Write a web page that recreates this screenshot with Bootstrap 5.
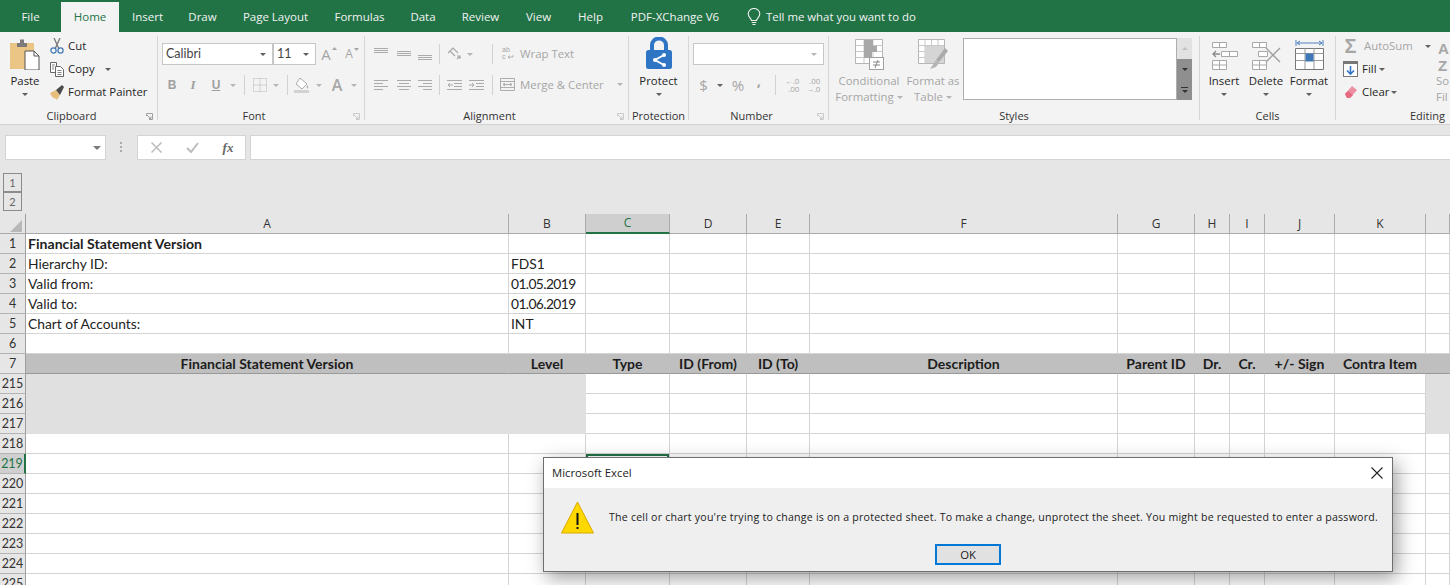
<!doctype html>
<html lang="en">
<head>
<meta charset="utf-8">
<title>Microsoft Excel</title>
<link href="https://cdn.jsdelivr.net/npm/bootstrap@5.3.0/dist/css/bootstrap.min.css" rel="stylesheet">
<style>
html,body{height:585px;overflow:hidden}
body{position:relative;width:1450px;font-family:"Open Sans","Noto Sans",sans-serif;font-size:11.4px;color:#262626;background:#e6e6e6}
svg{display:block}
.tabs{height:32px;background:#217346;display:grid;grid-template-columns:61px 58px 57px 53px 93px 75px 52px 63px 53px 51px 118px 1fr;padding-top:2px;flex-wrap:nowrap}
.tabs .nav-link{padding:0;height:30px;line-height:30px;text-align:center;color:#f2f2f2;font-size:11.5px}
.tabs .nav-link.active{background:#f3f3f3;color:#217346}
.tell{display:flex;align-items:center;gap:5px;padding-left:13px;height:30px;color:#f2f2f2;font-size:11.4px}
.ribbon{height:93px;background:#f3f3f3;border-bottom:1px solid #d2d2d2;padding-top:4px;display:flex}
.rg{height:84px;border-right:1px solid #d6d6d6;flex:none;display:flex;flex-direction:column}
.rg:last-child{border-right:0;flex:1;min-width:0}
.g1{width:158px}.g2{width:207px}.g3{width:264px}.g4{width:60px}.g5{width:140px}.g6{width:371px}.g7{width:136px}
.rb{height:72px;flex:none;display:flex}
.pl4{padding-left:4px}.pl3{padding-left:3px}
.rl{height:12px;line-height:16px;display:grid;grid-template-columns:1fr auto 1fr;color:#333;font-size:11px;padding-right:14px}
.rl svg{justify-self:end;margin:5px -10px 0 0}
.rl.plain{grid-template-columns:1fr;padding-right:0;text-align:center}
.rl.edit{grid-template-columns:1fr;padding:0 0 0 74px}
.big{display:flex;flex-direction:column;align-items:center;padding-top:2px;white-space:nowrap;line-height:16px;flex:none}
.big .ic{height:32px;display:flex;align-items:flex-end;justify-content:center;margin-bottom:3px}
.big .car{margin-top:4px}
.big span .car{margin:0;vertical-align:middle}
.car{display:inline-block;width:0;height:0;border:3px solid transparent;border-top:3px solid #5f5f5f;border-bottom:0;flex:none}
.dim .car,.car.dim{border-top-color:#b5b5b5}
.dim{color:#a6a6a6}
.three{display:grid;grid-template-rows:20px 20px 20px;row-gap:3px;flex:none}
.three>div{display:flex;align-items:center;white-space:nowrap}
.clip-big{width:50px}
.prot{width:59px}
.clip-small>div{gap:4px}
.clip-small .car{margin-left:6px}
.tworow{padding:7px 0 0 4px;display:flex;flex-direction:column;gap:9px}
.row2{display:grid;height:22px;align-items:center;justify-items:center}
.row2>.lft{justify-self:start;display:flex;align-items:center;white-space:nowrap}
.wrapt{padding-left:6px;gap:6px}
.merge{padding-left:4px;gap:5px}
.merge .car{margin-left:8px}
.f1{grid-template-columns:111px 43px 26px 20px}
.f2{grid-template-columns:20px 22px 24px 10px 12px 20px 12px 10px 20px 14px 22px 12px}
.a1{grid-template-columns:24px 22px 20px 8px 22px 10px 13px 8px auto}
.a2{grid-template-columns:24px 22px 20px 8px 22px 23px 8px auto}
.n1{grid-template-columns:131px}
.n2{grid-template-columns:21px 12px 24px 18px 14px 20px 22px}
.combo{height:22px;background:#fff;border:1px solid #c6c6c6;display:flex;align-items:center;justify-content:space-between;padding:0 6px 0 3px;font-family:"Lato",sans-serif;font-size:12.5px;color:#444;justify-self:stretch;width:100%}
.combo.end{justify-content:flex-end}
.vs{width:1px;height:20px;background:#d2d2d2}
.B{font-family:"Liberation Sans",sans-serif;font-weight:700;font-size:12px;color:#a0a0a0}
.I{font-family:"Liberation Serif",serif;font-style:italic;font-weight:700;font-size:13px;color:#a0a0a0}
.U{font-family:"Liberation Sans",sans-serif;font-weight:700;font-size:12px;color:#a0a0a0;text-decoration:underline}
.bigA{font-family:"Open Sans",sans-serif;font-size:15px;color:#a6a6a6;line-height:1;display:flex;align-items:flex-start;gap:1px}
.smA{font-size:12px;align-items:flex-start}
.colorA{font-size:16px;font-weight:600}
.dollar{font-size:15px;color:#a6a6a6}
.pct{font-size:15px;color:#a6a6a6}
.comma{font-weight:700;font-size:15px;color:#a6a6a6;line-height:1;margin-top:-9px}
.dec{font-size:8px;line-height:8px;color:#a6a6a6;text-align:right;white-space:pre}
.s-cf{width:72px}.s-ft{width:56px}
.gal{margin:2px 0 0 2px;height:62px;display:flex;flex:none}
.gal-w{width:214px;background:#fff;border:1px solid #aeaeae}
.gal-s{width:15px;display:flex;flex-direction:column}
.gal-s>div{flex:1;display:flex;flex-direction:column;align-items:center;justify-content:center;background:#8f8f8f}
.gal-s>div:first-child{background:#e2e2e2}
.gal-s .tri-u{width:0;height:0;border:3px solid transparent;border-bottom:3px solid #c0c0c0;border-top:0}
.gal-s .car{border-top-color:#333}
.gal-s .bar{width:7px;height:1px;background:#333;margin-bottom:2px}
.cw{width:42px}.cw2{width:44px}
.ed1{width:100px;padding-left:7px}
.ed1>div{gap:4px}
.ed1 .car.auto{margin-left:8px;border-top-color:#5f5f5f}
.ed1 .tight{gap:2px}
.ed1 .w15{width:15px;display:flex;justify-content:center;flex:none;margin-right:2px}
.sig{font-family:"Liberation Sans",sans-serif;font-size:20px;font-weight:700;color:#a6a6a6;line-height:20px}
.sortc{padding-top:4px;line-height:16px;color:#a6a6a6}
.az{font-family:"Liberation Sans",sans-serif;font-weight:700;font-size:15px;line-height:17px;height:30px;margin:0 0 3px 2px}
.fbar{height:89px;padding-top:10px}
.fbar-r{display:flex;height:25px}
.namebox{width:101px;margin-left:5px;background:#fff;border:1px solid #d4d4d4;display:flex;align-items:center;justify-content:flex-end;padding-right:3px}
.namebox .car{border-width:4px;border-top-color:#7a7a7a;border-bottom:0;margin-right:1px}
.dots{width:31px;display:flex;justify-content:center;align-items:center}
.fbtns{width:109px;background:#fff;border:1px solid #d4d4d4;display:grid;grid-template-columns:36px 36px 36px;align-items:center;justify-items:center;padding-left:0;margin-right:4px}
.fx{font-family:"Liberation Serif",serif;font-style:italic;font-size:13px;color:#666;font-weight:700}
.finput{flex:1;background:#fff;border:1px solid #d4d4d4;border-right:0}
.outl{width:19px;margin:13px 0 0 3px}
.outl .btn{display:block;width:19px;height:19px;margin-top:0;padding:0;border:1px solid #8c8c8c;border-radius:0;background:#e6e6e6;color:#666;font-family:"Lato",sans-serif;font-size:11px;line-height:17px}
.sheet{width:1450px;table-layout:fixed;border-collapse:separate;border-spacing:0;margin:0;font-family:"Lato","Liberation Sans",sans-serif;font-size:13.8px;color:#222}
.sheet th,.sheet td{height:20px;padding:0 2px;line-height:19px;white-space:nowrap;overflow:hidden;vertical-align:middle;box-sizing:border-box}
.sheet td{background:#fff;border-width:0 1px 1px 0;border-style:solid;border-color:#d4d4d4;font-weight:400}
.sheet thead th{background:#e6e6e6;border-width:0 1px 1px 0;border-style:solid;border-color:#ababab;text-align:center;font:400 12px/19px "Open Sans",sans-serif;color:#333}
.sheet tbody th{background:#e6e6e6;border-width:0 1px 1px 0;border-style:solid;border-color:#b4b4b4 #9e9e9e #b4b4b4 #b4b4b4;text-align:center;font:400 12.5px/19px "Lato",sans-serif;color:#333;padding:0}
.sheet thead th.corner{padding:0;border-right-color:#9e9e9e}
.sheet thead th.csel{background:#cfcfcf;color:#217346;border-bottom:2px solid #217346;line-height:18px}
.sheet tbody th.rsel{background:#cfcfcf;color:#217346;border-right:2px solid #217346}
.sheet td.b{font-weight:700;font-size:14.1px}
.sheet td.d{letter-spacing:-.6px}
.sheet tr.h td{background:#bfbfbf;border-color:#bfbfbf;border-bottom-color:#999;font-weight:700;font-size:14px;text-align:center;color:#1c1c1c}
.sheet td.gr{background:#e0e0e0;border-color:#e0e0e0}
.sheet td.sel{position:relative;box-shadow:inset 0 0 0 2px #217346}
.dlg{position:absolute;left:543px;top:457px;width:850px;height:115px;border:1px solid #6e6e6e;border-radius:0;background:#efefef;box-shadow:4px 6px 18px rgba(0,0,0,.38)}
.dlg .card-header{height:30px;background:#fff;border:0;border-radius:0;padding:0 9px 0 8px;display:flex;align-items:center;justify-content:space-between;font-size:11.3px;color:#222}
.dlg .card-body{padding:13px 0 0 17px;display:flex;flex-direction:column}
.msg{display:flex;align-items:center;gap:15px;font-size:10.6px;letter-spacing:.215px;color:#222;white-space:nowrap;height:33px}
.dlg .btn{align-self:flex-start;margin:10px 0 0 374px;width:66px;height:21px;padding:0;border:2px solid #0078d7;border-radius:0;background:#e1e1e1;color:#222;font-size:11.3px;line-height:17px}
</style>
</head>
<body>
<ul class="nav tabs">
<li class="nav-item"><a class="nav-link" href="#">File</a></li>
<li class="nav-item"><a class="nav-link active" href="#">Home</a></li>
<li class="nav-item"><a class="nav-link" href="#">Insert</a></li>
<li class="nav-item"><a class="nav-link" href="#">Draw</a></li>
<li class="nav-item"><a class="nav-link" href="#">Page Layout</a></li>
<li class="nav-item"><a class="nav-link" href="#">Formulas</a></li>
<li class="nav-item"><a class="nav-link" href="#">Data</a></li>
<li class="nav-item"><a class="nav-link" href="#">Review</a></li>
<li class="nav-item"><a class="nav-link" href="#">View</a></li>
<li class="nav-item"><a class="nav-link" href="#">Help</a></li>
<li class="nav-item"><a class="nav-link" href="#">PDF-XChange V6</a></li>
<li class="nav-item tell"><svg width="14" height="18" viewBox="0 0 14 18" fill="none" stroke="#f2f2f2" stroke-width="1.1"><path d="M4.5 12.5C4 10 1.2 9 1.2 5.8a5.8 5.3 0 0 1 11.6 0c0 3.2-2.8 4.2-3.3 6.7z"/><path d="M4.7 14.5h4.6M5.5 16.5h3"/></svg>Tell me what you want to do</li>
</ul>

<div class="ribbon">
 <!-- Clipboard -->
 <div class="rg g1">
  <div class="rb">
   <div class="big clip-big">
    <div class="ic"><svg width="30" height="32" viewBox="0 0 30 32"><rect x="0" y="5" width="24" height="26" fill="#eac585"/><path d="M7 5h3V1.500h4V5h3v4H7z" fill="#7b7b7b"/><path d="M15 13h9l5 5v14H15z" fill="#fff" stroke="#555" stroke-width="1"/><path d="M24 13v5h5" fill="none" stroke="#555"/></svg></div>
    <span>Paste</span><i class="car"></i>
   </div>
   <div class="three clip-small">
    <div><svg width="14" height="16" viewBox="0 0 14 16" fill="none"><path d="M4 0l5 11M10 0L5 11" stroke="#777" stroke-width="1.300"/><circle cx="3.500" cy="12.500" r="2.600" stroke="#3f78b8" stroke-width="1.200"/><circle cx="10.500" cy="12.500" r="2.600" stroke="#3f78b8" stroke-width="1.200"/></svg>Cut</div>
    <div><svg width="14" height="15" viewBox="0 0 14 15" fill="#fff" stroke="#666"><path d="M.5.5h6v10h-6z"/><path d="M5.500 4.500h5l3 3v7h-8z"/><path d="M7.500 8.500h4M7.500 10.500h4M7.500 12.500h4" stroke-width=".8"/><path d="M2 3h3M2 5h2M2 7h2" stroke-width=".8"/></svg>Copy <i class="car"></i></div>
    <div><svg width="14" height="15" viewBox="0 0 14 15"><path d="M0 8l6-3 4 5-3 5-2-2-1 1-1-2-1 0z" fill="#e6bf7c"/><path d="M6 5l6-5 2 2-4 8z" fill="#4a4a4a"/></svg>Format Painter</div>
   </div>
  </div>
  <div class="rl"><span></span><span>Clipboard</span><svg width="7" height="7" viewBox="0 0 7 7" fill="none" stroke="#8a8a8a" stroke-width=".8"><path d="M.5 3V.5H6.500V6.500H3M1 2l4 4M5 3.500V5.500H3"/></svg></div>
 </div>
 <!-- Font -->
 <div class="rg g2">
  <div class="rb"><div class="tworow">
   <div class="row2 f1">
    <div class="combo">Calibri<i class="car"></i></div>
    <div class="combo">11<i class="car"></i></div>
    <div class="bigA">A<svg width="5" height="4" viewBox="0 0 5 4"><path d="M0 3l2.500-3L5 3z" fill="#a6a6a6"/></svg></div>
    <div class="bigA smA">A<svg width="5" height="4" viewBox="0 0 5 4"><path d="M0 0l2.500 3L5 0z" fill="#a6a6a6"/></svg></div>
   </div>
   <div class="row2 f2">
    <span class="B">B</span><span class="I">I</span><span class="U">U</span><i class="car dim"></i><i class="vs"></i>
    <svg width="14" height="14" viewBox="0 0 14 14" fill="none" stroke="#b5b5b5" stroke-dasharray="1 1"><path d="M.5.500h13v13H.5zM7 .5v13M.5 7h13"/></svg><i class="car dim"></i><i class="vs"></i>
    <svg width="16" height="16" viewBox="0 0 16 16"><path d="M6 1l7 6-5 5-6-5z" fill="#fff" stroke="#aaa"/><path d="M13 8q2 2 1 3.500-2 0-1-3.500" fill="#aaa"/><rect x="0" y="13" width="15" height="3" fill="#d2d2d2"/></svg><i class="car dim"></i>
    <span class="bigA colorA">A</span><i class="car dim"></i>
   </div>
  </div></div>
  <div class="rl"><span></span><span>Font</span><svg width="7" height="7" viewBox="0 0 7 7" fill="none" stroke="#c0c0c0" stroke-width=".8"><path d="M.5 3V.5H6.500V6.500H3M1 2l4 4M5 3.500V5.500H3"/></svg></div>
 </div>
 <!-- Alignment -->
 <div class="rg g3">
  <div class="rb"><div class="tworow">
   <div class="row2 a1">
    <svg width="15" height="14" viewBox="0 0 15 14" stroke="#aaa"><path d="M0 1.500h14M0 3.500h14M0 5.500h14"/></svg>
    <svg width="15" height="14" viewBox="0 0 15 14" stroke="#aaa"><path d="M0 4.500h14M0 6.500h14M0 8.500h14"/></svg>
    <svg width="15" height="14" viewBox="0 0 15 14" stroke="#aaa"><path d="M0 8.500h14M0 10.500h14M0 12.500h14"/></svg>
    <i class="vs"></i>
    <svg width="14" height="14" viewBox="0 0 14 14" fill="none" stroke="#a6a6a6"><path d="M1 6l5-5 5 5M3 4l5 5M10 12l3-3M13 12V9h-3" stroke-width="1.100"/></svg>
    <i class="car dim"></i><span></span><i class="vs"></i>
    <div class="lft dim wrapt"><svg width="12" height="15" viewBox="0 0 12 15" fill="none" stroke="#a6a6a6"><text x="0" y="6" font-size="7" font-family="Liberation Sans" fill="#a6a6a6" stroke="none">ab</text><text x="0" y="13" font-size="7" font-family="Liberation Sans" fill="#a6a6a6" stroke="none">c</text><path d="M11 9v2H6M8 9.500L6 11l2 1.500" stroke-width=".8"/></svg>Wrap Text</div>
   </div>
   <div class="row2 a2">
    <svg width="15" height="13" viewBox="0 0 15 13" stroke="#aaa"><path d="M0 1.500h14M0 4.500h9M0 7.500h14M0 10.500h9"/></svg>
    <svg width="15" height="13" viewBox="0 0 15 13" stroke="#aaa"><path d="M0 1.500h14M2 4.500h10M0 7.500h14M2 10.500h10"/></svg>
    <svg width="15" height="13" viewBox="0 0 15 13" stroke="#aaa"><path d="M0 1.500h14M5 4.500h9M0 7.500h14M5 10.500h9"/></svg>
    <i class="vs"></i>
    <svg width="15" height="13" viewBox="0 0 15 13" stroke="#aaa" fill="none"><path d="M0 1.500h15M7 4.500h8M7 7.500h8M0 10.500h15M6 6H1M3 4L1 6l2 2"/></svg>
    <svg width="15" height="13" viewBox="0 0 15 13" stroke="#aaa" fill="none"><path d="M0 1.500h15M7 4.500h8M7 7.500h8M0 10.500h15M0 6h5M3 4l2 2-2 2"/></svg>
    <i class="vs"></i>
    <div class="lft dim merge"><svg width="15" height="15" viewBox="0 0 15 15" fill="none" stroke="#a6a6a6"><path d="M.5 1.500h14v12H.5zM.5 4.500h14M.5 10.500h14M3 7.500h9M5 6L3 7.500 5 9M10 6l2 1.500L10 9" stroke-width=".9"/></svg>Merge &amp; Center<i class="car"></i></div>
   </div>
  </div></div>
  <div class="rl"><span></span><span>Alignment</span><svg width="7" height="7" viewBox="0 0 7 7" fill="none" stroke="#c0c0c0" stroke-width=".8"><path d="M.5 3V.5H6.500V6.500H3M1 2l4 4M5 3.500V5.500H3"/></svg></div>
 </div>
 <!-- Protection -->
 <div class="rg g4">
  <div class="rb"><div class="big prot">
   <div class="ic"><svg width="28" height="33" viewBox="0 0 28 33"><path d="M7 14V8a7 6.500 0 0 1 14 0v6" fill="none" stroke="#2f75c5" stroke-width="4"/><rect x="1" y="13" width="26" height="19" rx="2.500" fill="#2f75c5"/><path d="M19 18l-9 5 9 5" fill="none" stroke="#fff" stroke-width="2"/><circle cx="10" cy="23" r="2" fill="#fff"/><circle cx="19" cy="18" r="2" fill="#fff"/><circle cx="19" cy="28" r="2" fill="#fff"/></svg></div>
   <span>Protect</span><i class="car"></i>
  </div></div>
  <div class="rl plain"><span>Protection</span></div>
 </div>
 <!-- Number -->
 <div class="rg g5">
  <div class="rb"><div class="tworow">
   <div class="row2 n1"><div class="combo end"><i class="car dim"></i></div></div>
   <div class="row2 n2">
    <span class="dollar">$</span><i class="car"></i><span class="pct">%</span><span class="comma">,</span><i class="vs"></i>
    <span class="dec">←.0
.00</span><span class="dec">.00
→.0</span>
   </div>
  </div></div>
  <div class="rl"><span></span><span>Number</span><svg width="7" height="7" viewBox="0 0 7 7" fill="none" stroke="#c0c0c0" stroke-width=".8"><path d="M.5 3V.5H6.500V6.500H3M1 2l4 4M5 3.500V5.500H3"/></svg></div>
 </div>
 <!-- Styles -->
 <div class="rg g6">
  <div class="rb pl4">
   <div class="big dim s-cf">
    <div class="ic"><svg width="29" height="31" viewBox="0 0 29 31"><path d="M.5.500h27v24H.500z" fill="#fff" stroke="#b5b5b5"/><path d="M9 .5v24M18 .5v24M.5 6.500h27M.5 12.500h27M.5 18.500h27" stroke="#c8c8c8"/><path d="M9 1h9v6h-9zM9 7h13v6H9zM9 13h8v6H9z" fill="#a8a8a8"/><rect x="14.500" y="18.500" width="14" height="12" fill="#fff" stroke="#a0a0a0"/><path d="M18 23h7M18 26h7M23 21l-3 8" stroke="#888"/></svg></div>
    <span>Conditional</span><span>Formatting <i class="car"></i></span>
   </div>
   <div class="big dim s-ft">
    <div class="ic"><svg width="30" height="31" viewBox="0 0 30 31"><path d="M.5.500h26v24H.500z" fill="#fff" stroke="#b5b5b5"/><path d="M7 .5v24M13.500.5v24M20 .5v24M.5 6.500h26M.5 12.500h26M.5 18.500h26" stroke="#c8c8c8"/><path d="M7 7h19v17H7z" fill="#d5d5d5"/><path d="M30 12l-9 11-3-2 9-12z" fill="#aaa"/><path d="M18 21l3 3-3 4-6 2z" fill="#b5b5b5"/></svg></div>
    <span>Format as</span><span>Table <i class="car"></i></span>
   </div>
   <div class="gal"><div class="gal-w"></div><div class="gal-s"><div><i class="tri-u"></i></div><div><i class="car"></i></div><div><i class="bar"></i><i class="car"></i></div></div></div>
  </div>
  <div class="rl plain"><span>Styles</span></div>
 </div>
 <!-- Cells -->
 <div class="rg g7">
  <div class="rb pl3">
   <div class="big cw"><div class="ic"><svg width="27" height="28" viewBox="0 0 27 28" fill="#fff" stroke="#a8a8a8"><path d="M1.500.500h14v5h-14zM8.500.5v5M10.500 9.500h16v5h-16zM18.500 9.500v5M1.500 18.500h14v9h-14zM8.500 18.500v9M1.500 23h14"/><path d="M2 12h7M5 9l-3 3 3 3" fill="none" stroke="#8a8a8a" stroke-width="1.300"/></svg></div><span>Insert</span><i class="car"></i></div>
   <div class="big cw"><div class="ic"><svg width="30" height="28" viewBox="0 0 30 28" fill="#fff" stroke="#a8a8a8"><path d="M1.500.500h14v5h-14zM8.500.5v5M7.500 9.500h9v5h-9zM1.500 18.500h14v9h-14zM8.500 18.500v9M1.500 23h14"/><path d="M15 6l14 14M29 6L15 20" stroke="#a0a0a0" stroke-width="1.400"/></svg></div><span>Delete</span><i class="car"></i></div>
   <div class="big cw2"><div class="ic"><svg width="29" height="32" viewBox="0 0 29 32" fill="none"><path d="M1 2v6M28 2v6M2 5h25M5 3L2 5l3 2M24 3l3 2-3 2" stroke="#4f81bd"/><path d="M.5 10.500h28v21H.500z" fill="#fff" stroke="#777"/><path d="M10 10v21M19 10v21M.5 15.500h28M.5 22.500h28" stroke="#999"/><rect x="10.500" y="15.500" width="8" height="8" fill="#3f78b8"/></svg></div><span>Format</span><i class="car"></i></div>
  </div>
  <div class="rl plain"><span>Cells</span></div>
 </div>
 <!-- Editing -->
 <div class="rg">
  <div class="rb">
   <div class="three ed1">
    <div class="dim"><span class="w15 sig">Σ</span>AutoSum<i class="car auto"></i></div>
    <div class="tight"><span class="w15"><svg width="15" height="16" viewBox="0 0 15 16"><rect x=".5" y=".5" width="14" height="15" fill="#fff" stroke="#777"/><rect x="0" y="0" width="15" height="3" fill="#777"/><path d="M7.500 5v8M4 9.500l3.500 3.500L11 9.500" fill="none" stroke="#2f75c5" stroke-width="1.600"/></svg></span>Fill<i class="car"></i></div>
    <div class="tight"><span class="w15"><svg width="14" height="14" viewBox="0 0 14 14"><path d="M1 9l7-8 5 4-7 8H3z" fill="#ec8fa0"/><path d="M1 9l3-3 5 4-3 3H3z" fill="#e56a80"/></svg></span>Clear<i class="car"></i></div>
   </div>
   <div class="sortc"><div class="az">A<br>Z</div><div>So</div><div>Fil</div></div>
  </div>
  <div class="rl edit"><span>Editing</span></div>
 </div>
</div>

<div class="fbar">
 <div class="fbar-r">
  <div class="namebox"><i class="car"></i></div>
  <div class="dots"><svg width="3" height="11" viewBox="0 0 3 11" fill="#aaa"><rect width="2" height="2"/><rect y="4" width="2" height="2"/><rect y="8" width="2" height="2"/></svg></div>
  <div class="fbtns">
   <svg width="11" height="11" viewBox="0 0 11 11" stroke="#bcbcbc" stroke-width="1.500"><path d="M.5.500l10 10M10.500.500l-10 10"/></svg>
   <svg width="13" height="11" viewBox="0 0 13 11" fill="none" stroke="#bcbcbc" stroke-width="2"><path d="M1 6l4 4 7-9"/></svg>
   <span class="fx">fx</span>
  </div>
  <div class="finput"></div>
 </div>
 <div class="outl"><button class="btn" type="button">1</button><button class="btn" type="button">2</button></div>
</div>

<table class="table sheet">
<colgroup><col width="26"><col width="483"><col width="77"><col width="84"><col width="77"><col width="63"><col width="308"><col width="77"><col width="35"><col width="35"><col width="70"><col width="91"><col width="24"></colgroup>
<thead><tr><th class="corner"><svg width="25" height="19" viewBox="0 0 25 19"><path d="M22 6v12H10z" fill="#b8b8b8"/></svg></th><th>A</th><th>B</th><th class="csel">C</th><th>D</th><th>E</th><th>F</th><th>G</th><th>H</th><th>I</th><th>J</th><th>K</th><th></th></tr></thead>
<tbody>
<tr><th>1</th><td class="b">Financial Statement Version</td><td></td><td></td><td></td><td></td><td></td><td></td><td></td><td></td><td></td><td></td><td></td></tr>
<tr><th>2</th><td>Hierarchy ID:</td><td>FDS1</td><td></td><td></td><td></td><td></td><td></td><td></td><td></td><td></td><td></td><td></td></tr>
<tr><th>3</th><td>Valid from:</td><td class="d">01.05.2019</td><td></td><td></td><td></td><td></td><td></td><td></td><td></td><td></td><td></td><td></td></tr>
<tr><th>4</th><td>Valid to:</td><td class="d">01.06.2019</td><td></td><td></td><td></td><td></td><td></td><td></td><td></td><td></td><td></td><td></td></tr>
<tr><th>5</th><td>Chart of Accounts:</td><td>INT</td><td></td><td></td><td></td><td></td><td></td><td></td><td></td><td></td><td></td><td></td></tr>
<tr><th>6</th><td></td><td></td><td></td><td></td><td></td><td></td><td></td><td></td><td></td><td></td><td></td><td></td></tr>
<tr class="h"><th>7</th><td>Financial Statement Version</td><td>Level</td><td>Type</td><td>ID (From)</td><td>ID (To)</td><td>Description</td><td>Parent ID</td><td>Dr.</td><td>Cr.</td><td>+/- Sign</td><td>Contra Item</td><td></td></tr>
<tr><th>215</th><td class="gr"></td><td class="gr"></td><td></td><td></td><td></td><td></td><td></td><td></td><td></td><td></td><td></td><td class="gr"></td></tr>
<tr><th>216</th><td class="gr"></td><td class="gr"></td><td></td><td></td><td></td><td></td><td></td><td></td><td></td><td></td><td></td><td class="gr"></td></tr>
<tr><th>217</th><td class="gr"></td><td class="gr"></td><td></td><td></td><td></td><td></td><td></td><td></td><td></td><td></td><td></td><td class="gr"></td></tr>
<tr><th>218</th><td></td><td></td><td></td><td></td><td></td><td></td><td></td><td></td><td></td><td></td><td></td><td></td></tr>
<tr><th class="rsel">219</th><td></td><td></td><td class="sel"></td><td></td><td></td><td></td><td></td><td></td><td></td><td></td><td></td><td></td></tr>
<tr><th>220</th><td></td><td></td><td></td><td></td><td></td><td></td><td></td><td></td><td></td><td></td><td></td><td></td></tr>
<tr><th>221</th><td></td><td></td><td></td><td></td><td></td><td></td><td></td><td></td><td></td><td></td><td></td><td></td></tr>
<tr><th>222</th><td></td><td></td><td></td><td></td><td></td><td></td><td></td><td></td><td></td><td></td><td></td><td></td></tr>
<tr><th>223</th><td></td><td></td><td></td><td></td><td></td><td></td><td></td><td></td><td></td><td></td><td></td><td></td></tr>
<tr><th>224</th><td></td><td></td><td></td><td></td><td></td><td></td><td></td><td></td><td></td><td></td><td></td><td></td></tr>
<tr><th>225</th><td></td><td></td><td></td><td></td><td></td><td></td><td></td><td></td><td></td><td></td><td></td><td></td></tr>
</tbody></table>

<div class="card dlg">
 <div class="card-header"><span>Microsoft Excel</span><svg width="12" height="12" viewBox="0 0 12 12" stroke="#222" stroke-width="1.100"><path d="M.5.500l11 11M11.500.500l-11 11"/></svg></div>
 <div class="card-body">
  <div class="msg"><svg width="33" height="33" viewBox="0 0 33 33"><path d="M16.500 1L32.500 32H.5z" fill="#ffd800" stroke="#d9a900" stroke-width="1" stroke-linejoin="round"/><rect x="15.500" y="12" width="2" height="12" fill="#111"/><rect x="15.500" y="26" width="2" height="2" fill="#111"/></svg><span>The cell or chart you're trying to change is on a protected sheet. To make a change, unprotect the sheet. You might be requested to enter a password.</span></div>
  <button type="button" class="btn">OK</button>
 </div>
</div>
<script src="https://cdn.jsdelivr.net/npm/bootstrap@5.3.0/dist/js/bootstrap.bundle.min.js"></script>
</body>
</html>
